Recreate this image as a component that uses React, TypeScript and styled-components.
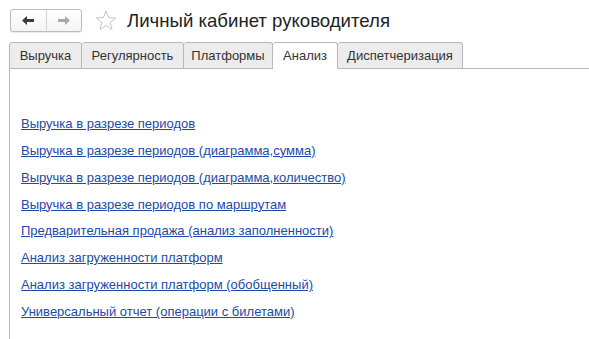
import React from "react";
import styled, { createGlobalStyle } from "styled-components";

const Global = createGlobalStyle`
  html, body { margin: 0; padding: 0; background: #fff; }
  body { font-family: Arial, "Liberation Sans", sans-serif; }
`;

const Page = styled.div`
  width: 589px;
  height: 339px;
  overflow: hidden;
  display: flex;
  flex-direction: column;
`;

const Header = styled.div`
  display: flex;
  align-items: center;
  padding: 9px 0 0 10px;
  height: 23px;
`;

const NavGroup = styled.div`
  display: flex;
  width: 72px;
  height: 23px;
  box-sizing: border-box;
  border: 1px solid #bcbcbc;
  border-radius: 3px;
  background: linear-gradient(#ffffff, #f4f4f4);
  box-shadow: 0 1px 1px rgba(0, 0, 0, 0.08);
`;

const NavButton = styled.div<{ $divider?: boolean }>`
  flex: 1;
  display: flex;
  align-items: center;
  justify-content: center;
  border-left: ${(p) => (p.$divider ? "1px solid #d4d4d4" : "none")};
`;

const StarWrap = styled.div`
  margin-left: 12px;
  width: 24px;
  height: 23px;
  display: flex;
  align-items: center;
  justify-content: center;
`;

const Title = styled.h1`
  margin: 0 0 0 9px;
  font-family: Arial, "Liberation Sans", sans-serif;
  font-weight: normal;
  font-size: 18.6px;
  color: #222;
  line-height: 23px;
`;

const TabBar = styled.div`
  display: flex;
  margin: 10px 0 0 9px;
  height: 27px;
  align-items: flex-end;
`;

const Tab = styled.div<{ $active?: boolean; $first?: boolean; $w: number }>`
  width: ${(p) => p.$w}px;
  height: 27px;
  box-sizing: border-box;
  display: flex;
  align-items: center;
  justify-content: center;
  font-size: 13px;
  color: #333;
  background: ${(p) => (p.$active ? "#fff" : "#ececec")};
  border: 1px solid #b8b8b8;
  border-bottom: ${(p) => (p.$active ? "1px solid #fff" : "1px solid #b8b8b8")};
  border-left: ${(p) => (p.$first ? "1px solid #b8b8b8" : "none")};
  border-radius: 3px 3px 0 0;
  position: relative;
  z-index: ${(p) => (p.$active ? 2 : 1)};
  padding-bottom: 1px;
`;

const Panel = styled.div`
  flex: 1;
  margin-left: 9px;
  margin-top: -1px;
  border-left: 1px solid #b8b8b8;
  border-top: 1px solid #b8b8b8;
  display: flex;
  flex-direction: column;
  padding: 47px 0 0 11px;
  gap: 11.85px;
`;

const ReportLink = styled.a`
  font-family: Arial, "Liberation Sans", sans-serif;
  font-size: 13px;
  line-height: 15px;
  color: #1c4aa8;
  text-decoration: underline;
  cursor: pointer;
  align-self: flex-start;
`;

const tabs = [
  { label: "Выручка", w: 73 },
  { label: "Регулярность", w: 102 },
  { label: "Платформы", w: 89 },
  { label: "Анализ", w: 65, active: true },
  { label: "Диспетчеризация", w: 125 },
];

const links = [
  "Выручка в разрезе периодов",
  "Выручка в разрезе периодов (диаграмма,сумма)",
  "Выручка в разрезе периодов (диаграмма,количество)",
  "Выручка в разрезе периодов по маршрутам",
  "Предварительная продажа (анализ заполненности)",
  "Анализ загруженности платформ",
  "Анализ загруженности платформ (обобщенный)",
  "Универсальный отчет (операции с билетами)",
];

const Arrow = ({ dir, color }: { dir: "l" | "r"; color: string }) => (
  <svg width="12" height="9" viewBox="0 0 12 9">
    {dir === "l" ? (
      <path d="M0 4.5 L5 0 V3 H12 V6 H5 V9 Z" fill={color} />
    ) : (
      <path d="M12 4.5 L7 0 V3 H0 V6 H7 V9 Z" fill={color} />
    )}
  </svg>
);

export default function App() {
  return (
    <Page>
      <Global />
      <Header>
        <NavGroup>
          <NavButton>
            <Arrow dir="l" color="#3a3a3a" />
          </NavButton>
          <NavButton $divider>
            <Arrow dir="r" color="#a8a8a8" />
          </NavButton>
        </NavGroup>
        <StarWrap>
          <svg width="22" height="21" viewBox="0 0 22 21">
            <path
              d="M11 1 L13.6 7.6 L20.6 8 L15.2 12.5 L17 19.4 L11 15.6 L5 19.4 L6.8 12.5 L1.4 8 L8.4 7.6 Z"
              fill="none"
              stroke="#c4c4c4"
              strokeWidth="1"
              strokeLinejoin="round"
            />
          </svg>
        </StarWrap>
        <Title>Личный кабинет руководителя</Title>
      </Header>
      <TabBar>
        {tabs.map((t, i) => (
          <Tab key={t.label} $w={t.w} $active={t.active} $first={i === 0}>
            {t.label}
          </Tab>
        ))}
      </TabBar>
      <Panel>
        {links.map((l) => (
          <ReportLink key={l}>{l}</ReportLink>
        ))}
      </Panel>
    </Page>
  );
}
